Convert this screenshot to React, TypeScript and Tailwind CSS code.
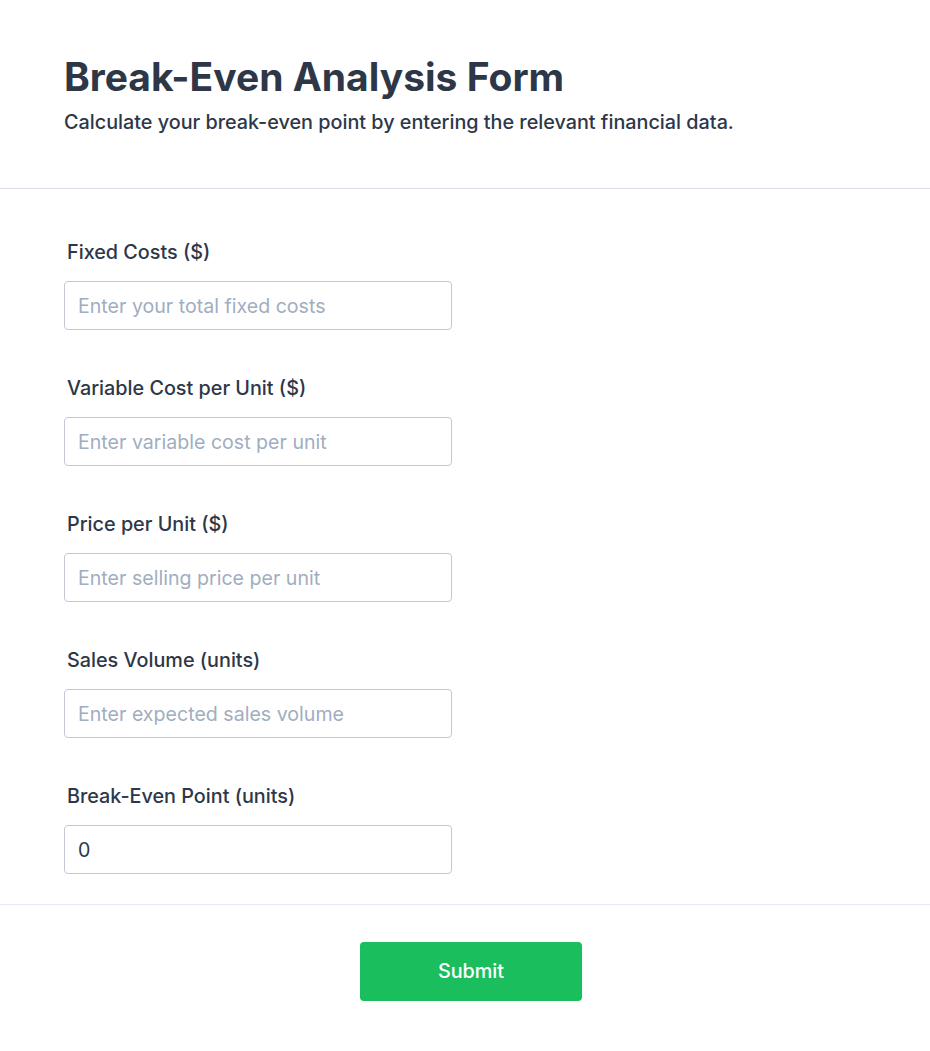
import React, { useState } from 'react';

const fields = [
  { id: 'fixed', label: 'Fixed Costs ($)', placeholder: 'Enter your total fixed costs' },
  { id: 'variable', label: 'Variable Cost per Unit ($)', placeholder: 'Enter variable cost per unit' },
  { id: 'price', label: 'Price per Unit ($)', placeholder: 'Enter selling price per unit' },
  { id: 'volume', label: 'Sales Volume (units)', placeholder: 'Enter expected sales volume' },
];

const App: React.FC = () => {
  const [values, setValues] = useState<Record<string, string>>({});

  const fixed = parseFloat(values.fixed || '0');
  const variable = parseFloat(values.variable || '0');
  const price = parseFloat(values.price || '0');
  const breakEven = price - variable > 0 ? Math.ceil(fixed / (price - variable)) : 0;

  return (
    <div
      className="min-h-[1051px] bg-white text-[#2d3748]"
      style={{ fontFamily: 'Inter, "Noto Sans", sans-serif' }}
    >
      <header className="px-16 pt-[57px] pb-13 border-b border-[#dcdfea]">
        <h1 className="text-[39px] leading-10 font-bold">Break-Even Analysis Form</h1>
        <p className="mt-[11px] text-[19.8px] leading-7 font-medium">
          Calculate your break-even point by entering the relevant financial data.
        </p>
      </header>

      <form onSubmit={(e) => e.preventDefault()}>
        <div className="px-16 pt-[49px] pb-[30px] border-b border-[#e6eaf2] flex flex-col gap-[44px]">
          {fields.map((f) => (
            <div key={f.id}>
              <label htmlFor={f.id} className="block pl-[3px] mb-[15px] text-[19.8px] leading-7 font-medium">
                {f.label}
              </label>
              <input
                id={f.id}
                type="number"
                placeholder={f.placeholder}
                value={values[f.id] || ''}
                onChange={(e) => setValues({ ...values, [f.id]: e.target.value })}
                className="w-[388px] h-[49px] px-[13px] text-[19.6px] border border-[#c3c8d2] rounded-[4px] placeholder:text-[#a0aec0] outline-none"
              />
            </div>
          ))}
          <div>
            <label htmlFor="breakeven" className="block pl-[3px] mb-[15px] text-[19.8px] leading-7 font-medium">
              Break-Even Point (units)
            </label>
            <input
              id="breakeven"
              readOnly
              value={breakEven}
              className="w-[388px] h-[49px] px-[13px] text-[19.6px] border border-[#c3c8d2] rounded-[4px] outline-none"
            />
          </div>
        </div>

        <div className="pt-[37px] pb-[50px] flex justify-center pl-[12px]">
          <button
            type="submit"
            className="w-[222px] h-[59px] rounded-[4px] bg-[#1abe5d] text-white text-[19.8px] font-medium"
          >
            Submit
          </button>
        </div>
      </form>
    </div>
  );
};

export default App;
